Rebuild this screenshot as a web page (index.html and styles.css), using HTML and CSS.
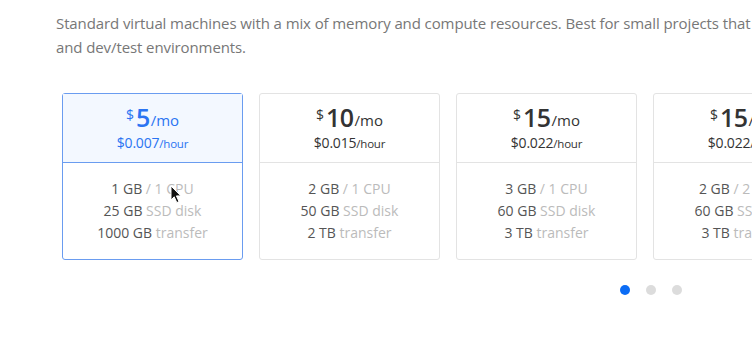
FILE: index.html
```html
<!DOCTYPE html>
<html>
<head>
<meta charset="utf-8">
<link rel="stylesheet" href="styles.css">
</head>
<body>
<div class="page">
  <p class="intro"><span class="line">Standard virtual machines with a mix of memory and compute resources. Best for small projects that can handle variable levels of CPU performance, like blogs, web apps</span><span class="line">and dev/test environments.</span></p>
  <div class="cards">
    <div class="card selected">
      <div class="head">
        <div class="price"><span class="cur">$</span><span class="amt">5</span><span class="per">/mo</span></div>
        <div class="hourly">$0.007<span class="hr">/hour</span></div>
      </div>
      <div class="body">
        <div class="spec"><b>1 GB</b> / 1 CPU</div>
        <div class="spec"><b>25 GB</b> SSD disk</div>
        <div class="spec"><b>1000 GB</b> transfer</div>
        <svg class="cursor" width="13" height="19" viewBox="0 0 13 19"><path d="M1 1 L1 15 L4.2 11.8 L6.8 17.6 L9 16.6 L6.4 10.9 L10.8 10.9 Z" fill="#111" stroke="#fff" stroke-width="1"/></svg>
      </div>
    </div>
    <div class="card">
      <div class="head">
        <div class="price"><span class="cur">$</span><span class="amt">10</span><span class="per">/mo</span></div>
        <div class="hourly">$0.015<span class="hr">/hour</span></div>
      </div>
      <div class="body">
        <div class="spec"><b>2 GB</b> / 1 CPU</div>
        <div class="spec"><b>50 GB</b> SSD disk</div>
        <div class="spec"><b>2 TB</b> transfer</div>
      </div>
    </div>
    <div class="card">
      <div class="head">
        <div class="price"><span class="cur">$</span><span class="amt">15</span><span class="per">/mo</span></div>
        <div class="hourly">$0.022<span class="hr">/hour</span></div>
      </div>
      <div class="body">
        <div class="spec"><b>3 GB</b> / 1 CPU</div>
        <div class="spec"><b>60 GB</b> SSD disk</div>
        <div class="spec"><b>3 TB</b> transfer</div>
      </div>
    </div>
    <div class="card">
      <div class="head">
        <div class="price"><span class="cur">$</span><span class="amt">15</span><span class="per">/mo</span></div>
        <div class="hourly">$0.022<span class="hr">/hour</span></div>
      </div>
      <div class="body">
        <div class="spec"><b>2 GB</b> / 2 CPUs</div>
        <div class="spec"><b>60 GB</b> SSD disk</div>
        <div class="spec"><b>3 TB</b> transfer</div>
      </div>
    </div>
  </div>
  <div class="dots">
    <span class="dot active"></span><span class="dot"></span><span class="dot"></span>
  </div>
</div>
</body>
</html>
```
FILE: styles.css
```css
html, body {
  margin: 0;
  padding: 0;
  background: #fff;
  overflow: hidden;
}
body {
  width: 752px;
  height: 338px;
  font-family: "Open Sans", "Noto Sans", sans-serif;
}
.page {
  padding: 11px 0 0 56px;
}
.intro {
  margin: 0;
  height: 48px;
  font-size: 15px;
  line-height: 24px;
  color: #777;
  letter-spacing: -0.1px;
}
.line {
  display: block;
  white-space: nowrap;
}
.cards {
  display: flex;
  gap: 16px;
  margin: 34px 0 0 6px;
}
.card {
  flex: 0 0 181px;
  box-sizing: border-box;
  height: 167px;
  border: 1px solid #e3e3e3;
  border-radius: 3px;
  background: #fff;
  display: flex;
  flex-direction: column;
}
.head {
  height: 69px;
  box-sizing: border-box;
  padding-top: 10px;
  text-align: center;
  border-bottom: 1px solid #e3e3e3;
  color: #333;
}
.price {
  height: 31px;
  line-height: 26px;
}
.cur, .amt, .per {
  display: inline-block;
  line-height: 26px;
  height: 26px;
  vertical-align: top;
}
.cur {
  font-size: 14px;
  line-height: 18px;
  height: 18px;
  margin-top: 2px;
  margin-right: 2px;
}
.amt {
  font-size: 25px;
  font-weight: 600;
  letter-spacing: -0.5px;
}
.per {
  font-size: 15px;
  line-height: 20px;
  height: 20px;
  margin-left: 1px;
  margin-top: 6px;
}
.hourly {
  font-size: 14px;
  line-height: 15px;
  font-weight: 400;
  letter-spacing: -0.2px;
}
.hr {
  font-size: 11.5px;
}
.body {
  position: relative;
  padding-top: 15px;
  text-align: center;
  font-size: 14px;
  line-height: 22px;
  color: #bbb;
}
.spec b {
  font-weight: 400;
  color: #555;
}
.card.selected {
  border-color: #6a9cf0;
}
.card.selected .head {
  background: #f3f8ff;
  border-bottom-color: #6a9cf0;
  color: #2a74f2;
}
.cursor {
  position: absolute;
  left: 107px;
  top: 22px;
}
.dots {
  display: flex;
  gap: 16px;
  margin: 25px 0 0 564px;
}
.dot {
  width: 10px;
  height: 10px;
  border-radius: 50%;
  background: #dcdcdc;
}
.dot.active {
  background: #0b6cf5;
}
```
